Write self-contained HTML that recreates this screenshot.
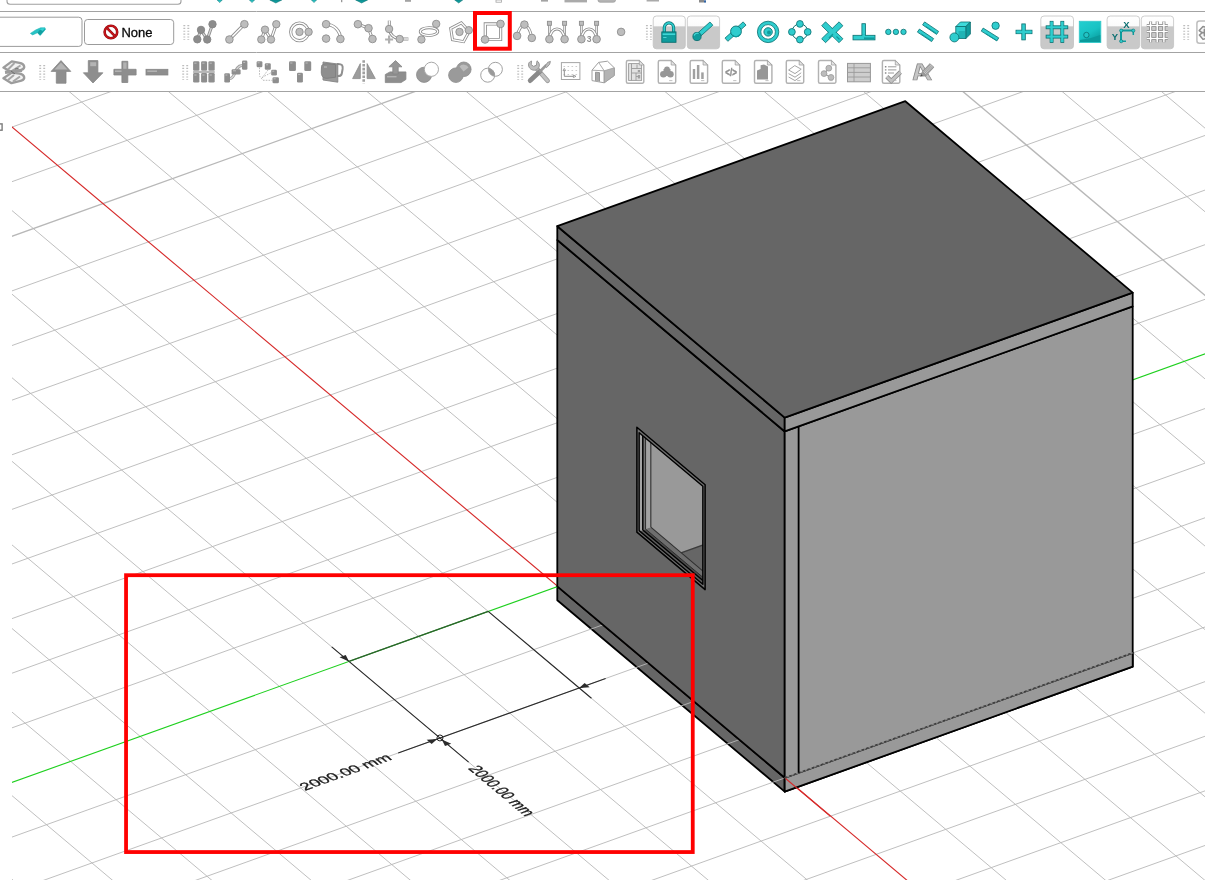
<!DOCTYPE html>
<html><head><meta charset="utf-8"><title>FreeCAD</title>
<style>
html,body{margin:0;padding:0;background:#fff;}
body{width:1205px;height:880px;position:relative;overflow:hidden;font-family:"Liberation Sans",sans-serif;}
</style></head><body>
<svg width="1205" height="880" viewBox="0 0 1205 880" style="position:absolute;left:0;top:0;will-change:transform">
<defs><clipPath id="vp"><rect x="12" y="92" width="1193" height="788"/></clipPath></defs>
<g clip-path="url(#vp)">
<g transform="translate(-0.5 0)">
<polygon points="557.80,586.40 785.20,777.80 785.20,791.65 557.80,600.25" fill="#666666" stroke="#000" stroke-width="1.8" stroke-linejoin="round" />
<polygon points="785.20,777.80 1133.20,652.80 1133.20,666.65 785.20,791.65" fill="#999999" stroke="#000" stroke-width="1.8" stroke-linejoin="round" />
</g>
<g fill="none">
<line x1="-1005.08" y1="273.92" x2="804.52" y2="-376.08" stroke="#b8b8b8" stroke-width="0.9" />
<line x1="-959.60" y1="312.20" x2="850.00" y2="-337.80" stroke="#b8b8b8" stroke-width="0.9" />
<line x1="-914.12" y1="350.48" x2="895.48" y2="-299.52" stroke="#b8b8b8" stroke-width="0.9" />
<line x1="-868.64" y1="388.76" x2="940.96" y2="-261.24" stroke="#b8b8b8" stroke-width="0.9" />
<line x1="-823.16" y1="427.04" x2="986.44" y2="-222.96" stroke="#b8b8b8" stroke-width="0.9" />
<line x1="-777.68" y1="465.32" x2="1031.92" y2="-184.68" stroke="#b8b8b8" stroke-width="0.9" />
<line x1="-732.20" y1="503.60" x2="1077.40" y2="-146.40" stroke="#b8b8b8" stroke-width="1.35" />
<line x1="-686.72" y1="541.88" x2="1122.88" y2="-108.12" stroke="#b8b8b8" stroke-width="0.9" />
<line x1="-641.24" y1="580.16" x2="1168.36" y2="-69.84" stroke="#b8b8b8" stroke-width="0.9" />
<line x1="-595.76" y1="618.44" x2="1213.84" y2="-31.56" stroke="#b8b8b8" stroke-width="0.9" />
<line x1="-550.28" y1="656.72" x2="1259.32" y2="6.72" stroke="#b8b8b8" stroke-width="0.9" />
<line x1="-504.80" y1="695.00" x2="1304.80" y2="45.00" stroke="#b8b8b8" stroke-width="0.9" />
<line x1="-459.32" y1="733.28" x2="1350.28" y2="83.28" stroke="#b8b8b8" stroke-width="0.9" />
<line x1="-413.84" y1="771.56" x2="1395.76" y2="121.56" stroke="#b8b8b8" stroke-width="0.9" />
<line x1="-368.36" y1="809.84" x2="1441.24" y2="159.84" stroke="#b8b8b8" stroke-width="0.9" />
<line x1="-322.88" y1="848.12" x2="1486.72" y2="198.12" stroke="#b8b8b8" stroke-width="0.9" />
<line x1="-231.92" y1="924.68" x2="1577.68" y2="274.68" stroke="#b8b8b8" stroke-width="0.9" />
<line x1="-186.44" y1="962.96" x2="1623.16" y2="312.96" stroke="#b8b8b8" stroke-width="0.9" />
<line x1="-140.96" y1="1001.24" x2="1668.64" y2="351.24" stroke="#b8b8b8" stroke-width="0.9" />
<line x1="-95.48" y1="1039.52" x2="1714.12" y2="389.52" stroke="#b8b8b8" stroke-width="0.9" />
<line x1="-50.00" y1="1077.80" x2="1759.60" y2="427.80" stroke="#b8b8b8" stroke-width="0.9" />
<line x1="-4.52" y1="1116.08" x2="1805.08" y2="466.08" stroke="#b8b8b8" stroke-width="0.9" />
<line x1="40.96" y1="1154.36" x2="1850.56" y2="504.36" stroke="#b8b8b8" stroke-width="0.9" />
<line x1="86.44" y1="1192.64" x2="1896.04" y2="542.64" stroke="#b8b8b8" stroke-width="0.9" />
<line x1="131.92" y1="1230.92" x2="1941.52" y2="580.92" stroke="#b8b8b8" stroke-width="0.9" />
<line x1="177.40" y1="1269.20" x2="1987.00" y2="619.20" stroke="#b8b8b8" stroke-width="1.35" />
<line x1="222.88" y1="1307.48" x2="2032.48" y2="657.48" stroke="#b8b8b8" stroke-width="0.9" />
<line x1="-1005.08" y1="273.92" x2="268.36" y2="1345.76" stroke="#b8b8b8" stroke-width="0.9" />
<line x1="-935.48" y1="248.92" x2="337.96" y2="1320.76" stroke="#b8b8b8" stroke-width="0.9" />
<line x1="-865.88" y1="223.92" x2="407.56" y2="1295.76" stroke="#b8b8b8" stroke-width="1.35" />
<line x1="-796.28" y1="198.92" x2="477.16" y2="1270.76" stroke="#b8b8b8" stroke-width="0.9" />
<line x1="-726.68" y1="173.92" x2="546.76" y2="1245.76" stroke="#b8b8b8" stroke-width="0.9" />
<line x1="-657.08" y1="148.92" x2="616.36" y2="1220.76" stroke="#b8b8b8" stroke-width="0.9" />
<line x1="-587.48" y1="123.92" x2="685.96" y2="1195.76" stroke="#b8b8b8" stroke-width="0.9" />
<line x1="-517.88" y1="98.92" x2="755.56" y2="1170.76" stroke="#b8b8b8" stroke-width="0.9" />
<line x1="-448.28" y1="73.92" x2="825.16" y2="1145.76" stroke="#b8b8b8" stroke-width="0.9" />
<line x1="-378.68" y1="48.92" x2="894.76" y2="1120.76" stroke="#b8b8b8" stroke-width="0.9" />
<line x1="-309.08" y1="23.92" x2="964.36" y2="1095.76" stroke="#b8b8b8" stroke-width="0.9" />
<line x1="-239.48" y1="-1.08" x2="1033.96" y2="1070.76" stroke="#b8b8b8" stroke-width="0.9" />
<line x1="-100.28" y1="-51.08" x2="1173.16" y2="1020.76" stroke="#b8b8b8" stroke-width="0.9" />
<line x1="-30.68" y1="-76.08" x2="1242.76" y2="995.76" stroke="#b8b8b8" stroke-width="0.9" />
<line x1="38.92" y1="-101.08" x2="1312.36" y2="970.76" stroke="#b8b8b8" stroke-width="0.9" />
<line x1="108.52" y1="-126.08" x2="1381.96" y2="945.76" stroke="#b8b8b8" stroke-width="0.9" />
<line x1="178.12" y1="-151.08" x2="1451.56" y2="920.76" stroke="#b8b8b8" stroke-width="0.9" />
<line x1="247.72" y1="-176.08" x2="1521.16" y2="895.76" stroke="#b8b8b8" stroke-width="0.9" />
<line x1="317.32" y1="-201.08" x2="1590.76" y2="870.76" stroke="#b8b8b8" stroke-width="0.9" />
<line x1="386.92" y1="-226.08" x2="1660.36" y2="845.76" stroke="#b8b8b8" stroke-width="0.9" />
<line x1="456.52" y1="-251.08" x2="1729.96" y2="820.76" stroke="#b8b8b8" stroke-width="0.9" />
<line x1="526.12" y1="-276.08" x2="1799.56" y2="795.76" stroke="#b8b8b8" stroke-width="1.35" />
<line x1="595.72" y1="-301.08" x2="1869.16" y2="770.76" stroke="#b8b8b8" stroke-width="0.9" />
<line x1="665.32" y1="-326.08" x2="1938.76" y2="745.76" stroke="#b8b8b8" stroke-width="0.9" />
<line x1="734.92" y1="-351.08" x2="2008.36" y2="720.76" stroke="#b8b8b8" stroke-width="0.9" />
<line x1="804.52" y1="-376.08" x2="2077.96" y2="695.76" stroke="#b8b8b8" stroke-width="0.9" />
<line x1="-169.88" y1="-26.08" x2="1103.56" y2="1045.76" stroke="#d62a2a" stroke-width="1.12" />
<line x1="-277.40" y1="886.40" x2="1532.20" y2="236.40" stroke="#1fd01f" stroke-width="1.12" />
</g>
<g transform="translate(-0.5 0)">
<polygon points="785.20,777.80 1133.20,652.80 1133.20,666.65 785.20,791.65" fill="#999999" stroke="#000" stroke-width="1.8" stroke-linejoin="round" />
<line x1="785.20" y1="777.80" x2="830.68" y2="816.08" stroke="#d62a2a" stroke-width="1.12" />
<polygon points="557.80,586.40 785.20,777.80 785.20,431.45 557.80,240.05" fill="#666666" stroke="#000" stroke-width="1.8" stroke-linejoin="round" />
<polygon points="785.20,777.80 1133.20,652.80 1133.20,306.45 785.20,431.45" fill="#999999" stroke="none" stroke-width="0" stroke-linejoin="round" />
<polyline points="785.20,777.80 785.20,431.45 1133.20,306.45 1133.20,652.80" fill="none" stroke="#000" stroke-width="1.8" stroke-linejoin="round"/>
<line x1="785.20" y1="777.80" x2="1133.20" y2="652.80" stroke="#808080" stroke-width="1.3" />
<line x1="785.20" y1="777.80" x2="1133.20" y2="652.80" stroke="#3c3c3c" stroke-width="1.3" stroke-dasharray="2.6 2.2"/>
<line x1="799.12" y1="772.80" x2="799.12" y2="426.45" stroke="#000" stroke-width="1.8" />
<polygon points="557.80,240.05 785.20,431.45 785.20,417.60 557.80,226.20" fill="#666666" stroke="#000" stroke-width="1.8" stroke-linejoin="round" />
<polygon points="785.20,431.45 1133.20,306.45 1133.20,292.60 785.20,417.60" fill="#999999" stroke="#000" stroke-width="1.8" stroke-linejoin="round" />
<polygon points="557.80,226.20 785.20,417.60 1133.20,292.60 905.80,101.20" fill="#666666" stroke="#000" stroke-width="1.8" stroke-linejoin="round" />
<polygon points="637.39,532.17 705.61,589.59 705.61,484.71 637.39,427.29" fill="#6e6e6e" stroke="#000" stroke-width="1.5" stroke-linejoin="round" />
<clipPath id="win"><polygon points="639.66,530.62 703.34,584.21 703.34,486.26 639.66,432.67"/></clipPath>
<g clip-path="url(#win)">
<polygon points="639.66,530.62 703.34,584.21 703.34,486.26 639.66,432.67" fill="#999999" stroke="none" stroke-width="0" stroke-linejoin="round" />
<polygon points="566.90,594.06 984.50,444.06 1202.80,627.80 785.20,777.80" fill="#666666" stroke="#3c3c3c" stroke-width="1.2" stroke-linejoin="round" />
<polygon points="637.39,532.17 705.61,589.59 711.53,587.46 643.31,530.04" fill="#5e5e5e" stroke="none" stroke-width="0" stroke-linejoin="round" />
<polygon points="643.31,530.04 711.53,587.46 714.24,586.49 646.02,529.07" fill="#4a4a4a" stroke="none" stroke-width="0" stroke-linejoin="round" />
<polygon points="646.02,529.07 714.24,586.49 719.53,584.59 651.31,527.17" fill="#6e6e6e" stroke="none" stroke-width="0" stroke-linejoin="round" />
<line x1="643.31" y1="530.04" x2="711.53" y2="587.46" stroke="#000" stroke-width="1.4" />
<line x1="646.02" y1="529.07" x2="714.24" y2="586.49" stroke="#2a2a2a" stroke-width="1.0" />
<line x1="651.31" y1="527.17" x2="719.53" y2="584.59" stroke="#2e2e2e" stroke-width="1.1" />
<polygon points="637.39,532.17 643.31,530.04 643.31,425.17 637.39,427.29" fill="#a4a4a4" stroke="none" stroke-width="0" stroke-linejoin="round" />
<polygon points="643.31,530.04 646.02,529.07 646.02,424.19 643.31,425.17" fill="#747474" stroke="none" stroke-width="0" stroke-linejoin="round" />
<polygon points="646.02,529.07 651.31,527.17 651.31,422.29 646.02,424.19" fill="#a2a2a2" stroke="none" stroke-width="0" stroke-linejoin="round" />
<line x1="643.31" y1="530.04" x2="643.31" y2="425.17" stroke="#000" stroke-width="1.5" />
<line x1="646.02" y1="529.07" x2="646.02" y2="424.19" stroke="#333" stroke-width="1.1" />
<line x1="651.31" y1="527.17" x2="651.31" y2="422.29" stroke="#3a3a3a" stroke-width="1.2" />
</g>
<polygon points="639.66,530.62 703.34,584.21 703.34,486.26 639.66,432.67" fill="none" stroke="#000" stroke-width="1.4" stroke-linejoin="round" />
</g>
<line x1="331.72" y1="646.85" x2="468.61" y2="762.08" stroke="#2b2b2b" stroke-width="1.15" />
<line x1="398.20" y1="752.96" x2="605.61" y2="678.46" stroke="#2b2b2b" stroke-width="1.15" />
<line x1="349.00" y1="661.40" x2="488.20" y2="611.40" stroke="#2f5f2f" stroke-width="1.15" />
<line x1="488.20" y1="611.40" x2="591.44" y2="698.30" stroke="#2b2b2b" stroke-width="1.15" />
<polygon points="349.00,661.40 345.76,654.92 339.50,657.17" fill="#2b2b2b"/>
<polygon points="441.78,739.49 451.28,743.73 445.01,745.98" fill="#2b2b2b"/>
<polygon points="437.18,738.96 431.67,743.94 426.67,739.73" fill="#2b2b2b"/>
<polygon points="579.16,687.96 589.67,687.19 584.66,682.98" fill="#2b2b2b"/>
<circle cx="439.96" cy="737.96" r="3.0" fill="none" stroke="#222" stroke-width="1"/>
<g opacity="0.998"><text transform="matrix(1.5799 -0.5675 1.0324 0.8690 305.09 790.77)" font-family="Liberation Sans, sans-serif" font-size="10" fill="#1a1a1a" stroke="#1a1a1a" stroke-width="0.25" text-rendering="geometricPrecision">2000.00 mm</text></g>
<g opacity="0.998"><text transform="matrix(1.0324 0.8690 -1.5799 0.5675 467.84 768.53)" font-family="Liberation Sans, sans-serif" font-size="10" fill="#1a1a1a" stroke="#1a1a1a" stroke-width="0.25" text-rendering="geometricPrecision">2000.00 mm</text></g>
</g>
<rect x="-6" y="123.9" width="8.1" height="6.3" fill="none" stroke="#7c7c7c" stroke-width="1.4"/>
<rect x="126.05" y="575.2" width="566.7" height="276.85" fill="none" stroke="#ff0000" stroke-width="3.8"/>
</svg>
<svg width="1205" height="92" viewBox="0 0 1205 92" style="position:absolute;left:0;top:0;will-change:transform"><rect x="0" y="0" width="1205" height="92" fill="#ffffff"/>
<line x1="0" y1="11.5" x2="1205" y2="11.5" stroke="#a3a3a3" stroke-width="1"/>
<line x1="0" y1="52.5" x2="1205" y2="52.5" stroke="#a3a3a3" stroke-width="1"/>
<line x1="0" y1="91.5" x2="1205" y2="91.5" stroke="#a3a3a3" stroke-width="1"/>
<rect x="7" y="-20" width="174" height="24.3" rx="3" fill="#fff" stroke="#a0a0a0" stroke-width="1.1"/>
<polygon points="217.20,0.00 222.20,0.00 219.70,2.60" fill="#2fcdce" stroke="#0a6f70" stroke-width="0.5" />
<polygon points="249.50,0.00 254.50,0.00 252.00,2.60" fill="#2fcdce" stroke="#0a6f70" stroke-width="0.5" />
<polygon points="311.50,0.00 316.50,0.00 314.00,2.60" fill="#2fcdce" stroke="#0a6f70" stroke-width="0.5" />
<polygon points="269.80,0.00 281.80,0.00 275.80,3.00" fill="#0f9c9d" stroke="#0a6f70" stroke-width="0.5" />
<polygon points="355.60,0.00 367.60,0.00 361.60,3.00" fill="#0f9c9d" stroke="#0a6f70" stroke-width="0.5" />
<polygon points="454.70,0.00 462.70,0.00 458.70,3.00" fill="#0f9c9d" stroke="#0a6f70" stroke-width="0.5" />
<rect x="341.40" y="0.00" width="0.80" height="2.20" fill="#555" stroke="none" stroke-width="0" rx="0"/>
<rect x="405.00" y="0.00" width="6.00" height="1.80" fill="#a3a3a3" stroke="none" stroke-width="0" rx="0"/>
<rect x="460.00" y="0.00" width="2.00" height="0.10" fill="#a3a3a3" stroke="none" stroke-width="0" rx="0"/>
<rect x="496.00" y="0.00" width="5.50" height="2.20" fill="#fff" stroke="#a3a3a3" stroke-width="0.8" rx="0"/>
<rect x="541.00" y="0.00" width="7.00" height="1.60" fill="#a3a3a3" stroke="none" stroke-width="0" rx="0"/>
<rect x="564.50" y="0.00" width="22.50" height="2.40" fill="#aaa" stroke="none" stroke-width="0" rx="0"/>
<rect x="598.00" y="-3.00" width="17.50" height="5.20" fill="#b4b4b4" stroke="#999" stroke-width="0.7" rx="2"/>
<rect x="646.60" y="0.00" width="12.40" height="1.50" fill="#aaa" stroke="none" stroke-width="0" rx="0"/>
<rect x="699.00" y="0.00" width="5.00" height="2.50" fill="#8a8a8a" stroke="none" stroke-width="0" rx="0"/>
<rect x="704.00" y="0.30" width="2.00" height="2.30" fill="#3465a4" stroke="none" stroke-width="0" rx="0"/>
<rect x="-10" y="17.2" width="92" height="29.2" rx="3.2" fill="#fff" stroke="#909090" stroke-width="0.9"/>
<path d="M30.4 33.4 L35.6 30 L40.6 27.8 L45 27.8 L45.5 29.4 L40.2 35.5 L37.4 32.8 L32.6 34.9 Z" fill="#27c3c5" stroke="#23b5b7" stroke-width="0.6" stroke-linejoin="round"/>
<path d="M37.4 32.8 L40.4 29.2 L45.2 29.2 L40.2 35.3 Z" fill="#129fa1" stroke="none" stroke-width="0" />
<path d="M39.8 29.6 L42.2 28.2 L44.6 28.6 L42.8 31 Z" fill="#35d3d5" stroke="none" stroke-width="0" />
<rect x="84.5" y="19.5" width="89.2" height="25" rx="3.2" fill="#fff" stroke="#909090" stroke-width="0.9"/>
<circle cx="110.9" cy="32" r="6.3" fill="#fff" stroke="#8f0a0e" stroke-width="2.6"/><circle cx="110.9" cy="32" r="6.3" fill="none" stroke="#c9151b" stroke-width="1.5"/>
<line x1="106.6" y1="27.7" x2="115.2" y2="36.3" stroke="#8f0a0e" stroke-width="2.6"/><line x1="106.6" y1="27.7" x2="115.2" y2="36.3" stroke="#c9151b" stroke-width="1.5"/>
<text x="121.4" y="36.6" font-family="Liberation Sans, sans-serif" font-size="13" fill="#0a0a0a" stroke="#0a0a0a" stroke-width="0.3">None</text>
<line x1="184.3" y1="25.0" x2="184.3" y2="40.0" stroke="#bdbdbd" stroke-width="1.9" stroke-dasharray="1.15 1.7"/><line x1="188.3" y1="25.0" x2="188.3" y2="40.0" stroke="#bdbdbd" stroke-width="1.9" stroke-dasharray="1.15 1.7"/><path d="M197.30 39.30 L201.00 29.90 L207.20 39.50 L212.50 24.20" fill="none" stroke="#8a8a8a" stroke-width="3.0" stroke-linecap="butt" stroke-linejoin="miter"/><path d="M197.30 39.30 L201.00 29.90 L207.20 39.50 L212.50 24.20" fill="none" stroke="#d8d8d8" stroke-width="1.3" stroke-linecap="butt" stroke-linejoin="miter"/>
<circle cx="197.30" cy="39.30" r="3.70" fill="#8c8c8c" stroke="#868686" stroke-width="0.9"/>
<circle cx="201.00" cy="29.90" r="3.70" fill="#8c8c8c" stroke="#868686" stroke-width="0.9"/>
<circle cx="207.20" cy="39.50" r="3.70" fill="#8c8c8c" stroke="#868686" stroke-width="0.9"/>
<circle cx="212.50" cy="24.20" r="3.70" fill="#8c8c8c" stroke="#868686" stroke-width="0.9"/>
<path d="M229.40 39.50 L244.40 24.20" fill="none" stroke="#8e8e8e" stroke-width="3.3" stroke-linecap="butt" stroke-linejoin="miter"/><path d="M229.40 39.50 L244.40 24.20" fill="none" stroke="#fff" stroke-width="1.5999999999999999" stroke-linecap="butt" stroke-linejoin="miter"/>
<circle cx="229.40" cy="39.50" r="3.80" fill="#bdbdbd" stroke="#8e8e8e" stroke-width="0.9"/>
<circle cx="244.40" cy="24.20" r="3.80" fill="#bdbdbd" stroke="#8e8e8e" stroke-width="0.9"/>
<path d="M261.30 39.50 L265.00 29.65 L271.00 39.50 L276.30 24.20" fill="none" stroke="#8e8e8e" stroke-width="3.0" stroke-linecap="butt" stroke-linejoin="miter"/><path d="M261.30 39.50 L265.00 29.65 L271.00 39.50 L276.30 24.20" fill="none" stroke="#fff" stroke-width="1.3" stroke-linecap="butt" stroke-linejoin="miter"/>
<circle cx="261.30" cy="39.50" r="3.70" fill="#bdbdbd" stroke="#8e8e8e" stroke-width="0.9"/>
<circle cx="265.00" cy="29.65" r="3.70" fill="#bdbdbd" stroke="#8e8e8e" stroke-width="0.9"/>
<circle cx="271.00" cy="39.50" r="3.70" fill="#bdbdbd" stroke="#8e8e8e" stroke-width="0.9"/>
<circle cx="276.30" cy="24.20" r="3.70" fill="#bdbdbd" stroke="#8e8e8e" stroke-width="0.9"/>
<circle cx="299.50" cy="31.90" r="8.8" fill="none" stroke="#8e8e8e" stroke-width="3.2"/><circle cx="299.50" cy="31.90" r="8.8" fill="none" stroke="#fff" stroke-width="1.5"/>
<circle cx="299.50" cy="31.90" r="3.70" fill="#bdbdbd" stroke="#8e8e8e" stroke-width="0.9"/>
<circle cx="308.60" cy="31.90" r="3.70" fill="#bdbdbd" stroke="#8e8e8e" stroke-width="0.9"/>
<path d="M326.10 24.40 A14.3 14.3 0 0 1 340.40 38.80" fill="none" stroke="#8e8e8e" stroke-width="3.3" stroke-linecap="butt" stroke-linejoin="miter"/><path d="M326.10 24.40 A14.3 14.3 0 0 1 340.40 38.80" fill="none" stroke="#fff" stroke-width="1.5999999999999999" stroke-linecap="butt" stroke-linejoin="miter"/>
<circle cx="326.10" cy="24.20" r="3.80" fill="#bdbdbd" stroke="#8e8e8e" stroke-width="0.9"/>
<circle cx="326.10" cy="38.60" r="3.80" fill="#bdbdbd" stroke="#8e8e8e" stroke-width="0.9"/>
<circle cx="340.40" cy="39.00" r="3.80" fill="#bdbdbd" stroke="#8e8e8e" stroke-width="0.9"/>
<path d="M357.90 24.20 L368.50 28.20 L372.50 39.00" fill="none" stroke="#8e8e8e" stroke-width="3.0" stroke-linecap="butt" stroke-linejoin="miter"/><path d="M357.90 24.20 L368.50 28.20 L372.50 39.00" fill="none" stroke="#fff" stroke-width="1.3" stroke-linecap="butt" stroke-linejoin="miter"/>
<circle cx="357.90" cy="24.20" r="3.80" fill="#bdbdbd" stroke="#8e8e8e" stroke-width="0.9"/>
<circle cx="368.50" cy="28.20" r="3.80" fill="#bdbdbd" stroke="#8e8e8e" stroke-width="0.9"/>
<circle cx="372.50" cy="39.00" r="3.80" fill="#bdbdbd" stroke="#8e8e8e" stroke-width="0.9"/>
<path d="M389.30 20.60 L389.30 26.00" fill="none" stroke="#8e8e8e" stroke-width="3.0" stroke-linecap="butt" stroke-linejoin="miter"/><path d="M389.30 20.60 L389.30 26.00" fill="none" stroke="#fff" stroke-width="1.3" stroke-linecap="butt" stroke-linejoin="miter"/>
<path d="M402.40 39.00 L408.40 39.00" fill="none" stroke="#8e8e8e" stroke-width="3.0" stroke-linecap="butt" stroke-linejoin="miter"/><path d="M402.40 39.00 L408.40 39.00" fill="none" stroke="#fff" stroke-width="1.3" stroke-linecap="butt" stroke-linejoin="miter"/>
<path d="M389.30 29.00 Q390.50 37.50 399.70 39.00" fill="none" stroke="#8e8e8e" stroke-width="3.0" stroke-linecap="butt" stroke-linejoin="miter"/><path d="M389.30 29.00 Q390.50 37.50 399.70 39.00" fill="none" stroke="#fff" stroke-width="1.3" stroke-linecap="butt" stroke-linejoin="miter"/>
<circle cx="389.10" cy="29.00" r="3.70" fill="#bdbdbd" stroke="#8e8e8e" stroke-width="0.9"/>
<circle cx="399.70" cy="39.00" r="3.70" fill="#bdbdbd" stroke="#8e8e8e" stroke-width="0.9"/>
<path d="M389.10 35.50v8M385.10 39.50h8" fill="none" stroke="#b0b0b0" stroke-width="2.2" />
<ellipse cx="429.00" cy="31.60" rx="8.7" ry="3.9" fill="none" stroke="#8e8e8e" stroke-width="3.0" transform="rotate(-1 429.00 31.60)"/><ellipse cx="429.00" cy="31.60" rx="8.7" ry="3.9" fill="none" stroke="#fff" stroke-width="1.3" transform="rotate(-1 429.00 31.60)"/>
<circle cx="436.20" cy="23.90" r="3.70" fill="#bdbdbd" stroke="#8e8e8e" stroke-width="0.9"/>
<circle cx="421.40" cy="39.50" r="3.70" fill="#bdbdbd" stroke="#8e8e8e" stroke-width="0.9"/>
<path d="M461.30 22.80 L450.70 28.30 L452.50 39.70 L463.60 41.70 L469.20 31.40 Z" fill="none" stroke="#8e8e8e" stroke-width="3.0" stroke-linecap="butt" stroke-linejoin="miter"/><path d="M461.30 22.80 L450.70 28.30 L452.50 39.70 L463.60 41.70 L469.20 31.40 Z" fill="none" stroke="#fff" stroke-width="1.3" stroke-linecap="butt" stroke-linejoin="miter"/>
<circle cx="459.50" cy="31.90" r="3.70" fill="#bdbdbd" stroke="#8e8e8e" stroke-width="0.9"/>
<circle cx="468.80" cy="30.20" r="3.70" fill="#bdbdbd" stroke="#8e8e8e" stroke-width="0.9"/>
<path d="M485.30 23.90 L500.60 23.90 L500.60 39.50 L485.30 39.50 Z" fill="none" stroke="#8e8e8e" stroke-width="3.2" stroke-linecap="butt" stroke-linejoin="miter"/><path d="M485.30 23.90 L500.60 23.90 L500.60 39.50 L485.30 39.50 Z" fill="none" stroke="#fff" stroke-width="1.5000000000000002" stroke-linecap="butt" stroke-linejoin="miter"/>
<circle cx="500.50" cy="23.90" r="3.80" fill="#bdbdbd" stroke="#8e8e8e" stroke-width="0.9"/>
<circle cx="485.00" cy="39.50" r="3.80" fill="#bdbdbd" stroke="#8e8e8e" stroke-width="0.9"/>
<path d="M517.10 35.90 Q519.50 26.00 524.40 24.60 Q530.00 27.00 531.80 37.90" fill="none" stroke="#8e8e8e" stroke-width="3.0" stroke-linecap="butt" stroke-linejoin="miter"/><path d="M517.10 35.90 Q519.50 26.00 524.40 24.60 Q530.00 27.00 531.80 37.90" fill="none" stroke="#fff" stroke-width="1.3" stroke-linecap="butt" stroke-linejoin="miter"/>
<circle cx="524.40" cy="24.60" r="3.80" fill="#bdbdbd" stroke="#8e8e8e" stroke-width="0.9"/>
<circle cx="517.10" cy="35.90" r="3.80" fill="#bdbdbd" stroke="#8e8e8e" stroke-width="0.9"/>
<circle cx="531.80" cy="37.90" r="3.80" fill="#bdbdbd" stroke="#8e8e8e" stroke-width="0.9"/>
<path d="M549.40 23.30 L549.40 39.20" fill="none" stroke="#8e8e8e" stroke-width="2.6" stroke-linecap="butt" stroke-linejoin="miter"/><path d="M549.40 23.30 L549.40 39.20" fill="none" stroke="#fff" stroke-width="0.9000000000000001" stroke-linecap="butt" stroke-linejoin="miter"/>
<path d="M564.60 23.30 L564.60 39.20" fill="none" stroke="#8e8e8e" stroke-width="2.6" stroke-linecap="butt" stroke-linejoin="miter"/><path d="M564.60 23.30 L564.60 39.20" fill="none" stroke="#fff" stroke-width="0.9000000000000001" stroke-linecap="butt" stroke-linejoin="miter"/>
<path d="M549.40 39.20 C550.40 25.50 563.60 25.50 564.60 39.20" fill="none" stroke="#8e8e8e" stroke-width="3.0" stroke-linecap="butt" stroke-linejoin="miter"/><path d="M549.40 39.20 C550.40 25.50 563.60 25.50 564.60 39.20" fill="none" stroke="#fff" stroke-width="1.3" stroke-linecap="butt" stroke-linejoin="miter"/>
<rect x="547.40" y="21.30" width="4.00" height="4.00" fill="#bdbdbd" stroke="#8e8e8e" stroke-width="0.9" rx="0"/>
<circle cx="549.40" cy="39.20" r="3.80" fill="#bdbdbd" stroke="#8e8e8e" stroke-width="0.9"/>
<rect x="562.60" y="21.30" width="4.00" height="4.00" fill="#bdbdbd" stroke="#8e8e8e" stroke-width="0.9" rx="0"/>
<circle cx="564.60" cy="39.20" r="3.80" fill="#bdbdbd" stroke="#8e8e8e" stroke-width="0.9"/>
<path d="M581.40 23.30 L581.40 39.20" fill="none" stroke="#8e8e8e" stroke-width="2.6" stroke-linecap="butt" stroke-linejoin="miter"/><path d="M581.40 23.30 L581.40 39.20" fill="none" stroke="#fff" stroke-width="0.9000000000000001" stroke-linecap="butt" stroke-linejoin="miter"/>
<path d="M596.60 23.30 L596.60 39.20" fill="none" stroke="#8e8e8e" stroke-width="2.6" stroke-linecap="butt" stroke-linejoin="miter"/><path d="M596.60 23.30 L596.60 39.20" fill="none" stroke="#fff" stroke-width="0.9000000000000001" stroke-linecap="butt" stroke-linejoin="miter"/>
<path d="M581.40 39.20 C582.40 25.50 595.60 25.50 596.60 39.20" fill="none" stroke="#8e8e8e" stroke-width="3.0" stroke-linecap="butt" stroke-linejoin="miter"/><path d="M581.40 39.20 C582.40 25.50 595.60 25.50 596.60 39.20" fill="none" stroke="#fff" stroke-width="1.3" stroke-linecap="butt" stroke-linejoin="miter"/>
<rect x="579.40" y="21.30" width="4.00" height="4.00" fill="#bdbdbd" stroke="#8e8e8e" stroke-width="0.9" rx="0"/>
<circle cx="581.40" cy="39.20" r="3.80" fill="#bdbdbd" stroke="#8e8e8e" stroke-width="0.9"/>
<rect x="594.60" y="21.30" width="4.00" height="4.00" fill="#bdbdbd" stroke="#8e8e8e" stroke-width="0.9" rx="0"/>
<circle cx="596.60" cy="39.20" r="3.80" fill="#bdbdbd" stroke="#8e8e8e" stroke-width="0.9"/>
<text x="589.00" y="42.20" font-family="Liberation Sans, sans-serif" font-weight="bold" font-size="8.5" fill="#8e8e8e" text-anchor="middle">3</text>
<circle cx="621.10" cy="31.90" r="3.80" fill="#bdbdbd" stroke="#8e8e8e" stroke-width="0.9"/><line x1="646.9" y1="25.0" x2="646.9" y2="40.0" stroke="#bdbdbd" stroke-width="1.9" stroke-dasharray="1.15 1.7"/><line x1="650.9" y1="25.0" x2="650.9" y2="40.0" stroke="#bdbdbd" stroke-width="1.9" stroke-dasharray="1.15 1.7"/>
<defs><linearGradient id="cg653" x1="0" y1="0" x2="0" y2="1"><stop offset="0" stop-color="#ffffff"/><stop offset="0.30" stop-color="#fbfbfb"/><stop offset="0.33" stop-color="#c9c9c9"/><stop offset="1" stop-color="#c9c9c9"/></linearGradient></defs><rect x="653.20" y="16.00" width="32.10" height="32.80" rx="3.2" fill="url(#cg653)" stroke="#c2c2c2" stroke-width="0.8"/>
<path d="M664.3 32 V27.6 A4.65 4.65 0 0 1 673.6 27.6 V32" fill="none" stroke="#0a6f70" stroke-width="3.2" />
<path d="M664.3 32 V27.6 A4.65 4.65 0 0 1 673.6 27.6 V32" fill="none" stroke="#2fcdce" stroke-width="1.7" />
<rect x="661.80" y="31.90" width="14.20" height="10.40" fill="#0f9c9d" stroke="#0a6f70" stroke-width="0.9" rx="0"/>
<rect x="662.60" y="33.40" width="12.60" height="1.60" fill="#3fd6d6" stroke="none" stroke-width="0" rx="0"/>
<rect x="663.20" y="37.00" width="3.30" height="0.80" fill="#5fe0e0" stroke="none" stroke-width="0" rx="0"/>
<defs><linearGradient id="cg687" x1="0" y1="0" x2="0" y2="1"><stop offset="0" stop-color="#ffffff"/><stop offset="0.30" stop-color="#fbfbfb"/><stop offset="0.33" stop-color="#c9c9c9"/><stop offset="1" stop-color="#c9c9c9"/></linearGradient></defs><rect x="687.30" y="16.00" width="32.30" height="32.80" rx="3.2" fill="url(#cg687)" stroke="#c2c2c2" stroke-width="0.8"/>
<polygon points="699.94,36.80 712.84,25.20 709.96,22.00 697.06,33.60" fill="#2fcdce" stroke="#0a6f70" stroke-width="0.8" stroke-linejoin="round"/>
<circle cx="697.00" cy="36.50" r="4.10" fill="#0f9c9d" stroke="#0a6f70" stroke-width="0.9"/>
<path d="M694.2 35.6 A3 3 0 0 1 698.6 33.6" fill="none" stroke="#45d8d8" stroke-width="1.2" />
<polygon points="727.83,41.31 746.03,25.11 743.17,21.89 724.97,38.09" fill="#2fcdce" stroke="#0a6f70" stroke-width="0.8" stroke-linejoin="round"/>
<circle cx="736.00" cy="31.40" r="5.40" fill="#2fcdce" stroke="#0a6f70" stroke-width="0.9"/>
<path d="M732.6 35.2 A5 5 0 0 0 740.2 34.4" fill="none" stroke="#0f9c9d" stroke-width="1.3" />
<circle cx="768.10" cy="31.90" r="9.00" fill="#fff" stroke="#2fcdce" stroke-width="3.3"/>
<circle cx="768.1" cy="31.9" r="10.7" fill="none" stroke="#0a6f70" stroke-width="0.8"/><circle cx="768.1" cy="31.9" r="7.3" fill="none" stroke="#0a6f70" stroke-width="0.8"/>
<circle cx="768.10" cy="31.90" r="4.20" fill="#2fcdce" stroke="#0a6f70" stroke-width="0.9"/>
<circle cx="769.00" cy="32.60" r="2.00" fill="#0f9c9d" stroke="none" stroke-width="0"/>
<circle cx="799.9" cy="31.8" r="7.9" fill="none" stroke="#0a6f70" stroke-width="1"/>
<circle cx="799.90" cy="23.90" r="3.40" fill="#2fcdce" stroke="#0a6f70" stroke-width="0.8"/>
<circle cx="791.90" cy="31.90" r="3.40" fill="#2fcdce" stroke="#0a6f70" stroke-width="0.8"/>
<circle cx="807.70" cy="31.90" r="3.40" fill="#2fcdce" stroke="#0a6f70" stroke-width="0.8"/>
<circle cx="799.90" cy="39.60" r="3.40" fill="#2fcdce" stroke="#0a6f70" stroke-width="0.8"/>
<polygon points="821.68,25.77 839.08,42.67 842.92,38.73 825.52,21.83" fill="#2fcdce" stroke="#0a6f70" stroke-width="0.8" stroke-linejoin="round"/>
<polygon points="839.08,21.83 821.68,38.73 825.52,42.67 842.92,25.77" fill="#2fcdce" stroke="#0a6f70" stroke-width="0.8" stroke-linejoin="round"/>
<polygon points="823.11,26.35 838.51,41.25 841.49,38.15 826.09,23.25" fill="#2fcdce" stroke="none" stroke-width="0" stroke-linejoin="round"/>
<path d="M829 38 L833 34 M836.5 36.5 L839.5 39.5" fill="none" stroke="#0f9c9d" stroke-width="1.3" />
<rect x="861.90" y="23.70" width="3.60" height="12.30" fill="#2fcdce" stroke="#0a6f70" stroke-width="0.8" rx="0"/>
<rect x="853.00" y="35.30" width="22.00" height="4.60" fill="#2fcdce" stroke="#0a6f70" stroke-width="0.8" rx="0"/>
<rect x="862.30" y="35.00" width="2.80" height="1.20" fill="#2fcdce" stroke="none" stroke-width="0" rx="0"/>
<rect x="864.00" y="37.40" width="10.40" height="1.90" fill="#0f9c9d" stroke="none" stroke-width="0" rx="0"/>
<circle cx="888.30" cy="31.90" r="2.70" fill="#2fcdce" stroke="#0a6f70" stroke-width="0.8"/>
<circle cx="895.90" cy="31.90" r="2.70" fill="#2fcdce" stroke="#0a6f70" stroke-width="0.8"/>
<circle cx="903.50" cy="31.90" r="2.70" fill="#2fcdce" stroke="#0a6f70" stroke-width="0.8"/>
<polygon points="922.59,24.89 936.59,34.39 938.61,31.41 924.61,21.91" fill="#2fcdce" stroke="#0a6f70" stroke-width="0.8" stroke-linejoin="round"/>
<polygon points="917.40,32.10 931.60,41.60 933.60,38.60 919.40,29.10" fill="#2fcdce" stroke="#0a6f70" stroke-width="0.8" stroke-linejoin="round"/>
<path d="M926 26.5 L936 33.2 M921 33.8 L931 40.4" fill="none" stroke="#0f9c9d" stroke-width="1.0" />
<polygon points="955.80,26.60 960.40,22.00 970.40,22.00 965.80,26.60" fill="#3fdada" stroke="#0a6f70" stroke-width="0.8" stroke-linejoin="round"/>
<polygon points="965.80,26.60 970.40,22.00 970.40,34.00 965.80,38.60" fill="#0f9c9d" stroke="#0a6f70" stroke-width="0.8" stroke-linejoin="round"/>
<rect x="955.80" y="26.60" width="10.00" height="12.00" fill="#2fcdce" stroke="#0a6f70" stroke-width="0.8" rx="0"/>
<rect x="958.50" y="31.00" width="6.50" height="7.00" fill="#1fb4b5" stroke="none" stroke-width="0" rx="0"/>
<circle cx="954.40" cy="37.40" r="4.50" fill="#2fcdce" stroke="#0a6f70" stroke-width="0.8"/>
<polygon points="981.24,31.12 996.84,40.92 998.76,37.88 983.16,28.08" fill="#2fcdce" stroke="#0a6f70" stroke-width="0.8" stroke-linejoin="round"/>
<path d="M985.5 33.5 L996.5 40.3" fill="none" stroke="#0f9c9d" stroke-width="1.0" />
<circle cx="995.60" cy="25.70" r="3.70" fill="#2fcdce" stroke="#0a6f70" stroke-width="0.8"/>
<rect x="1016.00" y="30.20" width="16.00" height="3.50" fill="#2fcdce" stroke="#0a6f70" stroke-width="0.8" rx="0"/>
<rect x="1021.80" y="23.90" width="3.50" height="16.00" fill="#2fcdce" stroke="#0a6f70" stroke-width="0.8" rx="0"/>
<rect x="1016.60" y="30.70" width="14.80" height="2.50" fill="#2fcdce" stroke="none" stroke-width="0" rx="0"/>
<defs><linearGradient id="cg1040" x1="0" y1="0" x2="0" y2="1"><stop offset="0" stop-color="#ffffff"/><stop offset="0.30" stop-color="#fbfbfb"/><stop offset="0.33" stop-color="#c9c9c9"/><stop offset="1" stop-color="#c9c9c9"/></linearGradient></defs><rect x="1040.80" y="16.00" width="32.70" height="32.80" rx="3.2" fill="url(#cg1040)" stroke="#c2c2c2" stroke-width="0.8"/>
<rect x="1050.10" y="21.30" width="3.00" height="21.20" fill="#2fcdce" stroke="#0a6f70" stroke-width="0.8" rx="0"/>
<rect x="1060.80" y="21.30" width="3.00" height="21.20" fill="#2fcdce" stroke="#0a6f70" stroke-width="0.8" rx="0"/>
<rect x="1046.10" y="25.80" width="21.70" height="3.00" fill="#2fcdce" stroke="#0a6f70" stroke-width="0.8" rx="0"/>
<rect x="1046.10" y="35.10" width="21.70" height="3.00" fill="#2fcdce" stroke="#0a6f70" stroke-width="0.8" rx="0"/>
<rect x="1050.50" y="21.80" width="2.20" height="20.20" fill="#2fcdce" stroke="none" stroke-width="0" rx="0"/>
<rect x="1061.20" y="21.80" width="2.20" height="20.20" fill="#2fcdce" stroke="none" stroke-width="0" rx="0"/>
<defs><linearGradient id="wpg" x1="0" y1="0" x2="0.6" y2="1"><stop offset="0" stop-color="#22cfd0"/><stop offset="0.6" stop-color="#18c2c3"/><stop offset="1" stop-color="#0a9fa0"/></linearGradient></defs>
<rect x="1079.30" y="21.30" width="21.50" height="21.20" fill="url(#wpg)" stroke="#35c9ca" stroke-width="0.9" rx="0"/>
<path d="M1091 38 L1100.3 35 V42 H1080 V40 Z" fill="#0a9a9b" stroke="none" stroke-width="0" />
<circle cx="1086.40" cy="35.00" r="2.70" fill="#21c4c5" stroke="#0a6f70" stroke-width="0.8"/>
<defs><linearGradient id="cg1107" x1="0" y1="0" x2="0" y2="1"><stop offset="0" stop-color="#ffffff"/><stop offset="0.30" stop-color="#fbfbfb"/><stop offset="0.33" stop-color="#c9c9c9"/><stop offset="1" stop-color="#c9c9c9"/></linearGradient></defs><rect x="1107.10" y="16.00" width="32.50" height="32.80" rx="3.2" fill="url(#cg1107)" stroke="#c2c2c2" stroke-width="0.8"/>
<path d="M1121 41.2 V30.6 H1133.3" fill="none" stroke="#0f9c9d" stroke-width="2.0" />
<path d="M1121 41.2 H1126 M1133.3 30.6 V35" fill="none" stroke="#0f9c9d" stroke-width="1.5" />
<circle cx="1121.20" cy="41.20" r="1.60" fill="#2fcdce" stroke="#0a6f70" stroke-width="0.6"/>
<circle cx="1121.20" cy="30.60" r="1.60" fill="#2fcdce" stroke="#0a6f70" stroke-width="0.6"/>
<circle cx="1133.30" cy="30.60" r="1.60" fill="#2fcdce" stroke="#0a6f70" stroke-width="0.6"/>
<text x="1126.3" y="28" font-family="Liberation Sans, sans-serif" font-weight="bold" font-size="9.5" fill="#0a6f70" text-anchor="middle">X</text>
<text x="1115" y="39.6" font-family="Liberation Sans, sans-serif" font-weight="bold" font-size="9.5" fill="#0a6f70" text-anchor="middle">Y</text>
<defs><linearGradient id="cg1141" x1="0" y1="0" x2="0" y2="1"><stop offset="0" stop-color="#ffffff"/><stop offset="0.30" stop-color="#fbfbfb"/><stop offset="0.33" stop-color="#c9c9c9"/><stop offset="1" stop-color="#c9c9c9"/></linearGradient></defs><rect x="1141.30" y="16.00" width="32.30" height="32.80" rx="3.2" fill="url(#cg1141)" stroke="#c2c2c2" stroke-width="0.8"/>
<path d="M1150.6 21.6V42.2M1157.2 21.6V42.2M1163.9 21.6V42.2M1146.8 25.6H1167.8M1146.8 31.6H1167.8M1146.8 38.4H1167.8" fill="none" stroke="#7c7c7c" stroke-width="3.0" />
<path d="M1150.6 21.6V42.2M1157.2 21.6V42.2M1163.9 21.6V42.2M1146.8 25.6H1167.8M1146.8 31.6H1167.8M1146.8 38.4H1167.8" fill="none" stroke="#fff" stroke-width="1.5" />
<line x1="1184.2" y1="25.0" x2="1184.2" y2="40.0" stroke="#bdbdbd" stroke-width="1.9" stroke-dasharray="1.15 1.7"/><line x1="1188.2" y1="25.0" x2="1188.2" y2="40.0" stroke="#bdbdbd" stroke-width="1.9" stroke-dasharray="1.15 1.7"/>
<rect x="1196.90" y="20.90" width="18.10" height="22.30" fill="#fff" stroke="#bebebe" stroke-width="1.5" rx="2.5"/>
<path d="M1199.2 30.6 L1203 26.4 L1207 27.4 L1207 32.6 L1203 33.4 Z" fill="#f4f4f4" stroke="#8e8e8e" stroke-width="1.5" stroke-linejoin="round"/>
<path d="M1199.4 35 L1202.4 32.6 L1207 33 L1207 38 L1203 39.4 Z" fill="#f4f4f4" stroke="#8e8e8e" stroke-width="1.5" stroke-linejoin="round"/>
<path d="M1203.6 29 L1207 28 V38 L1203.6 36 Z" fill="#8e8e8e" stroke="none" stroke-width="0" /><path d="M3.4 67.6 L11.8 61.4 L19.5 62.8 C25.2 63.8 25.6 68.6 21.4 69.8 L11.5 72.2 Z" fill="#f2f2f2" stroke="#9c9c9c" stroke-width="2.3" stroke-linejoin="round"/>
<path d="M3.4 78.2 L11.8 72.6 L19.5 73.6 C25.2 74.6 25.6 79.4 21.4 80.6 L11.5 83.2 Z" fill="#f2f2f2" stroke="#9c9c9c" stroke-width="2.3" stroke-linejoin="round"/>
<path d="M8 69.5 L14.5 63 M12.5 70.5 L20.5 65.5 M8 80 L14 75 M13 81.5 L20 76.5" fill="none" stroke="#a6a6a6" stroke-width="2.0" />
<path d="M5 72.4 L22 70.4" fill="none" stroke="#9c9c9c" stroke-width="3.4" />
<path d="M11 71 L15 74 M15 69 L18.5 68.5" fill="none" stroke="#6e6e6e" stroke-width="1.0" />
<line x1="40.2" y1="65.0" x2="40.2" y2="80.0" stroke="#bdbdbd" stroke-width="1.9" stroke-dasharray="1.15 1.7"/><line x1="44.2" y1="65.0" x2="44.2" y2="80.0" stroke="#bdbdbd" stroke-width="1.9" stroke-dasharray="1.15 1.7"/>
<polygon points="61.00,60.60 70.80,71.40 66.00,71.40 66.00,83.20 56.30,83.20 56.30,71.40 51.10,71.40" fill="#8e8e8e" stroke="#868686" stroke-width="0.8" stroke-linejoin="round"/>
<polygon points="61.00,62.40 67.50,69.60 54.50,69.60" fill="#b4b4b4" stroke="none" stroke-width="0" />
<polygon points="88.30,60.60 97.90,60.60 97.90,72.80 102.90,72.80 93.00,83.00 83.40,72.80 88.30,72.80" fill="#8e8e8e" stroke="#868686" stroke-width="0.8" stroke-linejoin="round"/>
<rect x="90.20" y="62.20" width="6.00" height="4.00" fill="#b4b4b4" stroke="none" stroke-width="0" rx="0"/>
<path d="M121.9 61.3 H127.8 V69.3 H136.1 V75 H127.8 V82.5 H121.9 V75 H113.9 V69.3 H121.9 Z" fill="#8e8e8e" stroke="#858585" stroke-width="0.8" />
<rect x="123.20" y="62.40" width="3.40" height="6.40" fill="#b2b2b2" stroke="none" stroke-width="0" rx="0"/>
<rect x="115.00" y="70.40" width="6.50" height="1.60" fill="#b2b2b2" stroke="none" stroke-width="0" rx="0"/>
<rect x="146.00" y="69.30" width="21.90" height="5.70" fill="#8e8e8e" stroke="#858585" stroke-width="0.8" rx="0"/>
<rect x="147.30" y="70.40" width="9.70" height="1.60" fill="#b2b2b2" stroke="none" stroke-width="0" rx="0"/>
<line x1="183.2" y1="65.0" x2="183.2" y2="80.0" stroke="#bdbdbd" stroke-width="1.9" stroke-dasharray="1.15 1.7"/><line x1="187.2" y1="65.0" x2="187.2" y2="80.0" stroke="#bdbdbd" stroke-width="1.9" stroke-dasharray="1.15 1.7"/>
<rect x="193.10" y="61.30" width="6.30" height="9.50" fill="#8e8e8e" stroke="none" stroke-width="0" rx="1.3"/>
<rect x="193.10" y="73.00" width="6.30" height="9.50" fill="#8e8e8e" stroke="none" stroke-width="0" rx="1.3"/>
<path d="M194.3 63.2h2.2M194.3 75h2.2" fill="none" stroke="#c8c8c8" stroke-width="0.8" />
<rect x="201.10" y="61.30" width="6.00" height="9.50" fill="#8e8e8e" stroke="none" stroke-width="0" rx="1.3"/>
<rect x="201.10" y="73.00" width="6.00" height="9.50" fill="#8e8e8e" stroke="none" stroke-width="0" rx="1.3"/>
<path d="M202.3 63.2h2.2M202.3 75h2.2" fill="none" stroke="#c8c8c8" stroke-width="0.8" />
<rect x="208.40" y="61.30" width="6.30" height="9.50" fill="#8e8e8e" stroke="none" stroke-width="0" rx="1.3"/>
<rect x="208.40" y="73.00" width="6.30" height="9.50" fill="#8e8e8e" stroke="none" stroke-width="0" rx="1.3"/>
<path d="M209.6 63.2h2.2M209.6 75h2.2" fill="none" stroke="#c8c8c8" stroke-width="0.8" />
<rect x="193.10" y="70.80" width="21.60" height="2.20" fill="#b8b8b8" stroke="none" stroke-width="0" rx="0"/>
<path d="M230 78.5 C236 78 234 66 242 65.5" fill="none" stroke="#a2a2a2" stroke-width="3.0" />
<path d="M230 78.5 C236 78 234 66 242 65.5" fill="none" stroke="#dcdcdc" stroke-width="1.2" />
<rect x="224.30" y="73.20" width="5.70" height="9.30" fill="#8e8e8e" stroke="none" stroke-width="0" rx="1.3"/>
<rect x="231.60" y="69.30" width="9.00" height="5.30" fill="#8e8e8e" stroke="none" stroke-width="0" rx="1.3"/>
<rect x="242.00" y="60.60" width="5.40" height="9.10" fill="#8e8e8e" stroke="none" stroke-width="0" rx="1.3"/>
<path d="M225.4 75h2M233 70.8h3M243.2 62.4h2" fill="none" stroke="#c8c8c8" stroke-width="0.8" />
<path d="M259.5 67.5 V76 L263 80.3 H272.5 M262 77.5 L271.5 72.5 M268 70 L262 78" fill="none" stroke="#b4b4b4" stroke-width="0.9" stroke-dasharray="1.6 1.2"/>
<rect x="256.60" y="61.30" width="5.80" height="6.00" fill="#8e8e8e" stroke="none" stroke-width="0" rx="1.3"/>
<rect x="264.80" y="63.30" width="6.00" height="6.40" fill="#8e8e8e" stroke="none" stroke-width="0" rx="1.3"/>
<rect x="271.20" y="69.70" width="5.70" height="5.80" fill="#8e8e8e" stroke="none" stroke-width="0" rx="1.3"/>
<rect x="272.50" y="77.20" width="6.40" height="6.00" fill="#8e8e8e" stroke="none" stroke-width="0" rx="1.3"/>
<path d="M257.6 62.8h2M266 64.8h2M272.3 71.2h2M273.6 78.8h2" fill="none" stroke="#c8c8c8" stroke-width="0.8" />
<rect x="289.00" y="61.30" width="6.90" height="9.70" fill="#8e8e8e" stroke="none" stroke-width="0" rx="1.3"/>
<rect x="304.30" y="61.30" width="6.90" height="9.70" fill="#8e8e8e" stroke="none" stroke-width="0" rx="1.3"/>
<rect x="297.00" y="72.80" width="5.90" height="9.70" fill="#8e8e8e" stroke="none" stroke-width="0" rx="1.3"/>
<path d="M290.2 63h2.2M305.5 63h2.2M298.2 74.5h2.2" fill="none" stroke="#c8c8c8" stroke-width="0.8" />
<path d="M337 64 C342.5 63.5 343 66 342.6 69 L341.8 73.5 C341.4 76 339 76.3 337 76" fill="none" stroke="#909090" stroke-width="2.0" />
<path d="M323 62 L337.8 64 V82.2 L323 80 Z" fill="#9a9a9a" stroke="#858585" stroke-width="0.9" stroke-linejoin="round"/>
<path d="M321.5 66.5 C321.5 64 326 63.6 328 63.8 L335.6 64.6 V77.2 L327 78.3 C322.5 78.3 321.3 75.5 321.3 72 Z" fill="#8e8e8e" stroke="#7e7e7e" stroke-width="0.9" />
<path d="M324 67h3" fill="none" stroke="#c8c8c8" stroke-width="0.9" />
<polygon points="352.60,78.60 360.30,78.60 360.30,63.60" fill="#9c9c9c" stroke="#8a8a8a" stroke-width="0.8" />
<polygon points="367.10,63.60 367.10,78.60 375.30,78.60" fill="#9c9c9c" stroke="#8a8a8a" stroke-width="0.8" />
<path d="M363.7 60.2 V83.2" fill="none" stroke="#a0a0a0" stroke-width="2.6" stroke-dasharray="2.6 1.2"/>
<path d="M385.3 74.5 L390 71.9 H405.9 V79.5 L401 82.6 H385.3 Z" fill="#8e8e8e" stroke="#858585" stroke-width="0.8" stroke-linejoin="round"/>
<path d="M387 76.8 h9.5" fill="none" stroke="#c2c2c2" stroke-width="1.0" />
<polygon points="395.50,60.60 402.00,66.80 398.20,66.80 398.20,74.00 392.80,74.00 392.80,66.80 388.90,66.80" fill="#979797" stroke="#858585" stroke-width="0.8" stroke-linejoin="round"/>
<circle cx="424.10" cy="74.80" r="7.60" fill="#9a9a9a" stroke="#8c8c8c" stroke-width="0.8"/>
<circle cx="431.40" cy="69.30" r="7.10" fill="#fff" stroke="#a8a8a8" stroke-width="1.0"/>
<circle cx="455.90" cy="75.20" r="7.30" fill="#9a9a9a" stroke="#8c8c8c" stroke-width="0.8"/>
<circle cx="463.80" cy="69.30" r="7.30" fill="#9a9a9a" stroke="#8c8c8c" stroke-width="0.8"/>
<circle cx="455.90" cy="75.20" r="6.90" fill="#9a9a9a" stroke="none" stroke-width="0"/>
<path d="M459.5 66.5 A5.5 5.5 0 0 1 468.5 67.5 L463.5 71.5 Z" fill="#bcbcbc" stroke="none" stroke-width="0" />
<clipPath id="cm"><circle cx="487.7" cy="75.2" r="7"/></clipPath>
<circle cx="495.4" cy="69.3" r="7" fill="#9a9a9a" clip-path="url(#cm)"/>
<circle cx="487.70" cy="75.20" r="7.00" fill="none" stroke="#a2a2a2" stroke-width="1.0"/>
<circle cx="495.40" cy="69.30" r="7.00" fill="none" stroke="#a2a2a2" stroke-width="1.0"/>
<line x1="518.2" y1="65.0" x2="518.2" y2="80.0" stroke="#bdbdbd" stroke-width="1.9" stroke-dasharray="1.15 1.7"/><line x1="522.2" y1="65.0" x2="522.2" y2="80.0" stroke="#bdbdbd" stroke-width="1.9" stroke-dasharray="1.15 1.7"/>
<path d="M547.6 80.8 L536 67.8" fill="none" stroke="#9c9c9c" stroke-width="4.6" stroke-linecap="round"/>
<path d="M547.6 80.8 L536 67.8" fill="none" stroke="#c2c2c2" stroke-width="2.8" stroke-linecap="round"/>
<path d="M528.6 63.6 C528 67 530.5 70.4 534.6 70.2 C538 70 540 67 539.2 63.8 C538.8 62.4 538 61.4 537 60.8 L536.4 65.2 L533.6 66.4 L531.2 64.6 L531.6 61 C530 61.4 529 62.4 528.6 63.6 Z" fill="#bdbdbd" stroke="#8e8e8e" stroke-width="0.9" stroke-linejoin="round"/>
<path d="M530.2 80.6 L539.8 71.6" fill="none" stroke="#8a8a8a" stroke-width="4.8" stroke-linecap="round"/>
<path d="M539.4 72 L546.4 65" fill="none" stroke="#9a9a9a" stroke-width="2.6" />
<path d="M545.2 66.2 L547.6 62.4 L550.4 61.4 L549.6 64.4 L546.6 67.6 Z" fill="#bdbdbd" stroke="#8e8e8e" stroke-width="0.9" stroke-linejoin="round"/>
<rect x="561.40" y="62.60" width="18.50" height="16.90" fill="#fff" stroke="#a6a6a6" stroke-width="1.0" rx="0"/>
<path d="M563.5 66.5h14M563.5 70.5h14M563.5 74.5h14" fill="none" stroke="#c6c6c6" stroke-width="0.9" stroke-dasharray="1.6 2.4"/>
<path d="M564.3 69.5 V76.3 H575" fill="none" stroke="#8e8e8e" stroke-width="1.0" />
<path d="M563 70.6 L564.3 68.4 L565.6 70.6 Z M573.4 75 L576 76.3 L573.4 77.6 Z" fill="#fff" stroke="#8e8e8e" stroke-width="0.8" />
<path d="M592 70.2 L598.6 62.4 L607.5 61.2 L614.3 67.8 V75.5 L604.2 82.8 L592 80.6 Z" fill="#fff" stroke="#a0a0a0" stroke-width="1.0" stroke-linejoin="round"/>
<path d="M604.2 70.8 L614.3 67.8 V75.5 L604.2 82.8 Z" fill="#b4b4b4" stroke="#a0a0a0" stroke-width="0.8" />
<path d="M598.6 62.4 L604.2 70.8 L592 70.2 M604.2 70.8 V82.8" fill="none" stroke="#a0a0a0" stroke-width="0.9" />
<path d="M595.5 80.8 V72.2 L599.5 72.6 V81.5" fill="#a8a8a8" stroke="#8e8e8e" stroke-width="0.9" />
<path d="M627.90 60.50 H639.30 L643.80 65.00 V81.70 A1.5 1.5 0 0 1 642.30 83.20 H627.90 A1.5 1.5 0 0 1 626.40 81.70 V62.00 A1.5 1.5 0 0 1 627.90 60.50 Z" fill="#fff" stroke="#b2b2b2" stroke-width="1.45" /><rect x="628.60" y="63.60" width="13.00" height="16.80" fill="#e2e2e2" stroke="#9a9a9a" stroke-width="0.9" rx="0"/><path d="M631.5 63.6V80.4M631.5 68.5H637V64.5M631.5 73H641.6M636 73V80.4M636 76.5h3M637 68.5h4.6" fill="none" stroke="#9a9a9a" stroke-width="0.9" /><rect x="637.80" y="70.00" width="2.40" height="2.00" fill="#a0a0a0" stroke="none" stroke-width="0" rx="0"/><rect x="637.80" y="75.00" width="2.40" height="3.50" fill="#a0a0a0" stroke="none" stroke-width="0" rx="0"/><polygon points="639.50,59.70 644.60,59.70 644.60,64.80" fill="#fff" stroke="none" stroke-width="0" /><path d="M639.30 60.50 V65.00 H643.80 Z" fill="#e6e6e6" stroke="#a0a0a0" stroke-width="0.8" /><path d="M637.30 80.60 h3.2" fill="none" stroke="#b0b0b0" stroke-width="0.8" />
<path d="M659.80 60.50 H671.20 L675.70 65.00 V81.70 A1.5 1.5 0 0 1 674.20 83.20 H659.80 A1.5 1.5 0 0 1 658.30 81.70 V62.00 A1.5 1.5 0 0 1 659.80 60.50 Z" fill="#fff" stroke="#b2b2b2" stroke-width="1.45" /><circle cx="667.00" cy="69.50" r="2.90" fill="#979797" stroke="none" stroke-width="0"/><circle cx="663.40" cy="74.20" r="3.30" fill="#979797" stroke="none" stroke-width="0"/><circle cx="670.40" cy="74.20" r="3.30" fill="#979797" stroke="none" stroke-width="0"/><rect x="663.50" y="69.00" width="7.00" height="7.00" fill="#979797" stroke="none" stroke-width="0" rx="0"/><polygon points="671.40,59.70 676.50,59.70 676.50,64.80" fill="#fff" stroke="none" stroke-width="0" /><path d="M671.20 60.50 V65.00 H675.70 Z" fill="#e6e6e6" stroke="#a0a0a0" stroke-width="0.8" /><path d="M669.20 80.60 h3.2" fill="none" stroke="#b0b0b0" stroke-width="0.8" />
<path d="M691.70 60.50 H703.10 L707.60 65.00 V81.70 A1.5 1.5 0 0 1 706.10 83.20 H691.70 A1.5 1.5 0 0 1 690.20 81.70 V62.00 A1.5 1.5 0 0 1 691.70 60.50 Z" fill="#fff" stroke="#b2b2b2" stroke-width="1.45" /><rect x="692.80" y="69.00" width="2.40" height="10.00" fill="#a0a0a0" stroke="none" stroke-width="0" rx="0"/><rect x="696.90" y="65.00" width="2.50" height="14.00" fill="#a0a0a0" stroke="none" stroke-width="0" rx="0"/><rect x="701.20" y="72.40" width="2.50" height="6.60" fill="#a0a0a0" stroke="none" stroke-width="0" rx="0"/><polygon points="703.30,59.70 708.40,59.70 708.40,64.80" fill="#fff" stroke="none" stroke-width="0" /><path d="M703.10 60.50 V65.00 H707.60 Z" fill="#e6e6e6" stroke="#a0a0a0" stroke-width="0.8" /><path d="M701.10 80.60 h3.2" fill="none" stroke="#b0b0b0" stroke-width="0.8" />
<path d="M723.80 60.50 H735.20 L739.70 65.00 V81.70 A1.5 1.5 0 0 1 738.20 83.20 H723.80 A1.5 1.5 0 0 1 722.30 81.70 V62.00 A1.5 1.5 0 0 1 723.80 60.50 Z" fill="#fff" stroke="#b2b2b2" stroke-width="1.45" /><text transform="translate(731.1 72.4) scale(1 1.4)" y="2.9" font-family="Liberation Sans, sans-serif" font-weight="bold" font-size="8" text-anchor="middle" fill="#8e8e8e" stroke="#8e8e8e" stroke-width="0.35">&lt;/&gt;</text><polygon points="735.40,59.70 740.50,59.70 740.50,64.80" fill="#fff" stroke="none" stroke-width="0" /><path d="M735.20 60.50 V65.00 H739.70 Z" fill="#e6e6e6" stroke="#a0a0a0" stroke-width="0.8" /><path d="M733.20 80.60 h3.2" fill="none" stroke="#b0b0b0" stroke-width="0.8" />
<path d="M756.00 60.50 H767.40 L771.90 65.00 V81.70 A1.5 1.5 0 0 1 770.40 83.20 H756.00 A1.5 1.5 0 0 1 754.50 81.70 V62.00 A1.5 1.5 0 0 1 756.00 60.50 Z" fill="#fff" stroke="#b2b2b2" stroke-width="1.45" /><path d="M757 79.6 V70.5 L760.6 69 V65.2 L764 64.6 L768 66.5 V79.6 Z" fill="#979797" stroke="none" stroke-width="0" /><polygon points="767.60,59.70 772.70,59.70 772.70,64.80" fill="#fff" stroke="none" stroke-width="0" /><path d="M767.40 60.50 V65.00 H771.90 Z" fill="#e6e6e6" stroke="#a0a0a0" stroke-width="0.8" /><path d="M765.40 80.60 h3.2" fill="none" stroke="#b0b0b0" stroke-width="0.8" />
<path d="M787.80 60.50 H799.20 L803.70 65.00 V81.70 A1.5 1.5 0 0 1 802.20 83.20 H787.80 A1.5 1.5 0 0 1 786.30 81.70 V62.00 A1.5 1.5 0 0 1 787.80 60.50 Z" fill="#fff" stroke="#b2b2b2" stroke-width="1.45" /><path d="M788.6 70 L794.8 65.6 L801.2 69.2 L795 73.6 Z M788.6 73.6 L795 77.2 L801.2 72.8 M788.6 77 L795 80.6 L801.2 76.2" fill="#fff" stroke="#9a9a9a" stroke-width="0.9" stroke-linejoin="round"/><polygon points="799.40,59.70 804.50,59.70 804.50,64.80" fill="#fff" stroke="none" stroke-width="0" /><path d="M799.20 60.50 V65.00 H803.70 Z" fill="#e6e6e6" stroke="#a0a0a0" stroke-width="0.8" /><path d="M797.20 80.60 h3.2" fill="none" stroke="#b0b0b0" stroke-width="0.8" />
<path d="M820.00 60.50 H831.40 L835.90 65.00 V81.70 A1.5 1.5 0 0 1 834.40 83.20 H820.00 A1.5 1.5 0 0 1 818.50 81.70 V62.00 A1.5 1.5 0 0 1 820.00 60.50 Z" fill="#fff" stroke="#b2b2b2" stroke-width="1.45" /><path d="M824 73.5 L829.4 68 M824 73.5 L830.8 77.6" fill="none" stroke="#9a9a9a" stroke-width="1.2" /><circle cx="828.80" cy="68.20" r="2.90" fill="#bcbcbc" stroke="#9a9a9a" stroke-width="0.8"/><circle cx="824.00" cy="73.60" r="2.90" fill="#bcbcbc" stroke="#9a9a9a" stroke-width="0.8"/><circle cx="831.00" cy="77.40" r="2.90" fill="#bcbcbc" stroke="#9a9a9a" stroke-width="0.8"/><polygon points="831.60,59.70 836.70,59.70 836.70,64.80" fill="#fff" stroke="none" stroke-width="0" /><path d="M831.40 60.50 V65.00 H835.90 Z" fill="#e6e6e6" stroke="#a0a0a0" stroke-width="0.8" /><path d="M829.40 80.60 h3.2" fill="none" stroke="#b0b0b0" stroke-width="0.8" />
<rect x="847.50" y="63.40" width="22.90" height="18.40" fill="#cecece" stroke="#989898" stroke-width="1.0" rx="0"/>
<path d="M847.5 67.8H870.4M847.5 72.4H870.4M847.5 77H870.4M854 63.4V81.8" fill="none" stroke="#9a9a9a" stroke-width="0.9" />
<path d="M883.90 60.50 H895.30 L899.80 65.00 V81.70 A1.5 1.5 0 0 1 898.30 83.20 H883.90 A1.5 1.5 0 0 1 882.40 81.70 V62.00 A1.5 1.5 0 0 1 883.90 60.50 Z" fill="#fff" stroke="#b2b2b2" stroke-width="1.45" /><path d="M888 66.8h8.4M888 69.9h8.4M888 73h6" fill="none" stroke="#9a9a9a" stroke-width="1.0" /><path d="M884.9 66.8h1.5M884.9 69.9h1.5M884.9 73h1.5" fill="none" stroke="#8a8a8a" stroke-width="1.4" /><path d="M886.8 76.6 L891.2 81 L900.4 72.2" fill="none" stroke="#8e8e8e" stroke-width="4.4" /><path d="M886.8 76.6 L891.2 81 L900.4 72.2" fill="none" stroke="#c2c2c2" stroke-width="2.7" /><polygon points="895.50,59.70 900.60,59.70 900.60,64.80" fill="#fff" stroke="none" stroke-width="0" /><path d="M895.30 60.50 V65.00 H899.80 Z" fill="#e6e6e6" stroke="#a0a0a0" stroke-width="0.8" /><path d="M893.30 80.60 h3.2" fill="none" stroke="#b0b0b0" stroke-width="0.8" />
<text font-family="Liberation Sans, sans-serif" font-weight="bold" font-size="23.6" fill="#c6c6c6" stroke="#8a8a8a" stroke-width="0.7" transform="translate(912.2 79.8) skewX(9) scale(1.18 1)">A</text>
<path d="M924.4 73.6 L932 65.2" fill="none" stroke="#8a8a8a" stroke-width="6.0" />
<path d="M924.4 73.6 L932 65.2" fill="none" stroke="#c9c9c9" stroke-width="4.4" />
<path d="M923.3 72.6 L930.9 64.2 M924.4 73.6 L932 65.2 M925.5 74.6 L933.1 66.2" fill="none" stroke="#8a8a8a" stroke-width="0.7" />
<polygon points="920.60,76.20 922.20,71.80 926.40,75.60" fill="#9a9a9a" stroke="#8a8a8a" stroke-width="0.6" />
<polygon points="920.40,76.40 921.20,74.20 922.80,75.60" fill="#4a4a4a" stroke="none" stroke-width="0" /><rect x="475" y="13" width="34.8" height="35.7" fill="none" stroke="#ff0000" stroke-width="4"/></svg>
</body></html>
